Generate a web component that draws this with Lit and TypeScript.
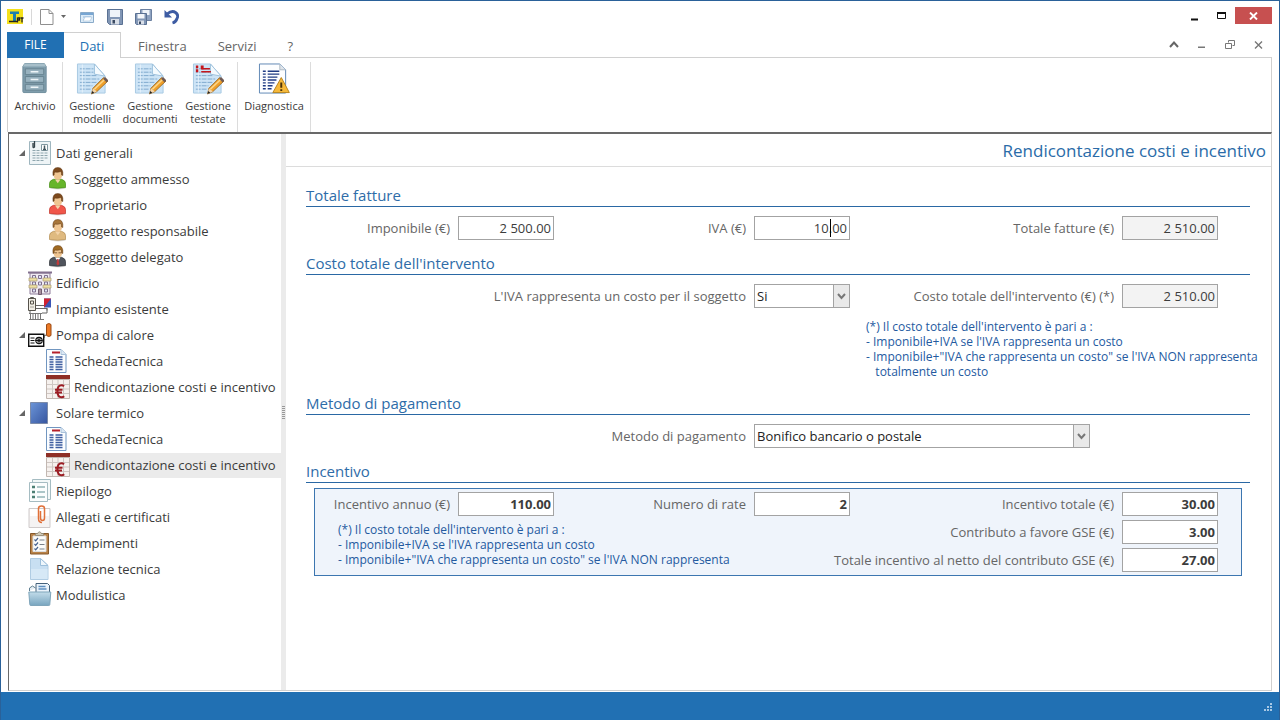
import { LitElement, html, svg, css, nothing } from "lit";
import { customElement } from "lit/decorators.js";
import { classMap } from "lit/directives/class-map.js";

const person = (shirt: string, dark: string, hair: string, suit = false) => svg`<g transform="translate(0 -1)">
  <ellipse cx="12" cy="22" rx="8" ry="1.500" fill="#000" opacity=".12"/>
  <path d="M3.500 21.500v-4q0-3 4-4.200h8q4 1.200 4 4.200v4q-8 1.500-16 0z" fill=${shirt} stroke=${dark} stroke-width=".7"/>
  <path d="M9 13.500l2.800 3.800 2.700-3.800z" fill=${suit ? "#fff" : "#f3d3a8"}/>
  ${suit ? svg`<path d="M11.200 15h1.300l.8 5-1.400 1.500-1.400-1.500z" fill="#c03a3a"/>` : nothing}
  <path d="M7.500 6q0-4 4.300-4t4.400 4v3q-.5 4.500-4.400 4.800-3.800-.3-4.300-4.800z" fill="#efc591"/>
  <path d="M7 9.500Q6 1.500 11.800 1.500T16.800 9.500L15.600 9q.2-2.500-.8-3.500-3 1.300-6 .5-.8 1-.7 3z" fill=${hair} stroke="#5a3413" stroke-width=".5"/>
  ${suit ? svg`<path d="M8.500 8.800h2.600m1.400 0h2.600" stroke="#6b4a2a" stroke-width=".8"/>` : nothing}</g>`;

const sheet = svg`
  <path d="M.5.5h14.500l5 5v18H.5z" fill="#fbfdff" stroke="#7196c0"/>
  <path d="M15 .5v5h5" fill="#dbe8f4" stroke="#a9c1da"/>
  <path d="M6 3.500h8" stroke="#b5202a" stroke-width="2"/>
  <path d="M3.500 8h4M9.500 8h7M3.500 10.500h4M9.500 10.500h7M3.500 13h4M9.500 13h7M3.500 15.500h4M9.500 15.500h7M3.500 18h4M9.500 18h7M3.500 20.500h4M9.500 20.500h7" stroke="#3c5ca0" stroke-width="1.300"/>`;

const euro = svg`
  <path d="M.5 4.500h23v19H.5z" fill="#f6f1ee" stroke="#c2b7b1"/>
  <path d="M1 9.500h22M1 14h22M1 18.500h22M6.500 5v18M12 5v18M17.500 5v18" stroke="#cfc7c3"/>
  <path d="M0 0h24v4H0z" fill="#8e2f26"/>
  <path d="M18 11.200q-1-.9-2.400-.9-4.200 0-4.200 6t4.200 6q1.500 0 2.600-1M9 14.800h7.500M9 17.500h7" fill="none" stroke="#9c1c23" stroke-width="2"/>`;

const glyphs: Record<string, unknown> = {
  general: svg`
    <path d="M1.500.5h21v23h-21z" fill="#eef4f6" stroke="#9fb6bf"/>
    <path d="M6.500 0v6q-1.500 1.500-1.500-.5V2" fill="none" stroke="#34434a" stroke-width="1.300"/>
    <path d="M13.500 3.500h6v6h-6z" fill="#fff" stroke="#7f979f"/>
    <path d="M16.500 4.500v4M15 8.500h3" stroke="#44575f" stroke-width="1.500"/>
    <path d="M4.500 9.500h7M4.500 12h15M4.500 14.500h15M4.500 17h15M4.500 19.500h11" stroke="#8fa6ae" stroke-dasharray="3 1"/>`,
  green: person("#66b52a", "#458c12", "#7d4a1d"),
  red: person("#f0564a", "#c03027", "#7d4a1d"),
  sand: person("#dfba80", "#b38d52", "#a8763a"),
  suit: person("#4f545c", "#2e3238", "#a06a22", true),
  building: svg`
    <path d="M2 2h20v21H2z" fill="#efeaf1" stroke="#8f7e9b"/>
    <path d="M0 1.500h24" stroke="#83718f" stroke-width="2"/>
    <path d="M4.500 4.500h3v3h-3zM10.500 4.500h3v3h-3zM16.500 4.500h3v3h-3zM4.500 11h3v3h-3zM10.500 11h3v3h-3zM16.500 11h3v3h-3zM4.500 18h3v3h-3zM16.500 18h3v3h-3z" fill="#dfe6f5" stroke="#806f8e"/>
    <path d="M1 7h8v3H1zM15 7h8v3h-8zM1 14h8v3H1zM15 14h8v3h-8z" fill="#eee0a3" stroke="#a99b74" stroke-width=".7"/>
    <path d="M10.500 18h3v5.500h-3z" fill="#a7909f" stroke="#705d70"/>`,
  plant: svg`
    <path d="M.5 1.500h7v12h-7z" fill="#f1eee5" stroke="#55524b"/>
    <path d="M2.500 1.500v-1h3v1M2.500 4h3v3h-3zM2.500 10h1m1 0h1" fill="none" stroke="#55524b"/>
    <path d="M8 8.500h9M8 11.500h11v2M2 14v3M19 11v5h-5" fill="none" stroke="#666"/>
    <path d="M16 1.500h7v9h-7z" fill="#3a55b5"/><path d="M16 1.500h7l-7 9z" fill="#cf2233"/>
    <path d="M2.500 16v7M5 16v7M7.500 16v7M10 16v7M12.500 16v7M1 16.500h13M1 22.500h15" stroke="#777"/>`,
  pump: svg`
    <path d="M18.500 1.500q2.500-2 4.500 0v11q-2 2-4.500 0z" fill="#ec7a26" stroke="#9a4a16"/>
    <path d="M18 12l-2 1v2" fill="none" stroke="#555"/>
    <path d="M.7 11.200h15v12h-15z" fill="#fff" stroke="#111" stroke-width="1.400"/>
    <path d="M2.500 15h4M2.500 17.500h4M2.500 20h4" stroke="#111"/>
    <circle cx="11" cy="17.500" r="3.200" fill="#fff" stroke="#111" stroke-width="1.200"/>
    <path d="M11 14v7M7.500 17.500h7M9 15.300l4 4.400M13 15.300l-4 4.400" stroke="#111"/>`,
  solar: svg`
    <defs><linearGradient id="sol" x2="1" y2="1"><stop stop-color="#6c95d8"/><stop offset="1" stop-color="#36559f"/></linearGradient></defs>
    <path d="M2.500 1.500h17v21h-17z" fill="url(#sol)" stroke="#7c8ba8"/>`,
  sheet,
  euro,
  summary: svg`
    <path d="M4.500.5h18v20h-18z" fill="#f3f8f8" stroke="#a5bcc2"/>
    <path d="M1.500 3.500h18v19h-18z" fill="#fbfdfd" stroke="#a5bcc2"/>
    <path d="M4 8h3M4 13h3M4 18h3" stroke="#4d7f74" stroke-width="2.600"/>
    <path d="M9 8h8M9 13h8M9 18h8" stroke="#93b4b7" stroke-width="1.400"/>`,
  clip: svg`
    <path d="M1 3.500h21v19H1z" fill="#f5f3f3" stroke="#cfcaca"/>
    <path d="M2 4h19v7H2z" fill="#fff"/>
    <path d="M12.500 6v7q0 2.500 2 2.500t2-2.500V3.500q0-2.500-3-2.500t-3 2.500v10q0 4 3.500 4" fill="none" stroke="#e0713a" stroke-width="1.500"/>`,
  tasks: svg`
    <path d="M2.500 2.500h18v20.500h-18z" fill="#b98349" stroke="#86592b"/>
    <path d="M5 5h13v15.500H5z" fill="#fcfcfa" stroke="#ddd"/>
    <path d="M7.500 4.500V2.500h2Q11.500-1 13.500 2.500h2v2z" fill="#cfc9b8" stroke="#8e8674" stroke-width=".8"/>
    <path d="M6.500 8.500l1.200 1.300L10 7M6.500 13l1.200 1.300L10 11.500M6.500 17.500l1.200 1.300L10 16" fill="none" stroke="#44618f" stroke-width="1.200"/>
    <path d="M11.500 9h5M11.500 13.500h5M11.500 18h5" stroke="#7a8189" stroke-width="1.200"/>`,
  page: svg`
    <path d="M2.500 1.500h10l7.500 7v14H2.500z" fill="#c8dff2" stroke="#b0cce3"/>
    <path d="M3 12h16.500v10H3z" fill="#d6e8f6"/>
    <path d="M12.500 1.500v7H20z" fill="#eef6fc" stroke="#9dbfdb"/>`,
  folder: svg`
    <path d="M1.500 8V5l3-2 3 2" fill="#e6eef3" stroke="#5f7f92"/>
    <path d="M8 .5h11.500l2 2v7H8z" fill="#eaf3fb" stroke="#45627b"/>
    <path d="M10.500 3.500h7M10.500 6h8" stroke="#5d8fc0" stroke-width="1.300"/>
    <defs><linearGradient id="fol" x2="0" y2="1"><stop stop-color="#c2dcea"/><stop offset="1" stop-color="#78a5bf"/></linearGradient></defs>
    <path d="M.8 9h22l-1 12.500q0 1-1 1h-18q-1 0-1-1z" fill="url(#fol)" stroke="#7fa5ba"/>`,
};

const pencil = svg`
  <path d="M33 18l-11.500 11-5.500 2.500 1.500-6L28.500 14.500z" fill="#f0a02a" stroke="#8d5a17" stroke-width=".8"/>
  <path d="M29.500 16.500L19 26.500" stroke="#fbd588" stroke-width="1.600"/>
  <path d="M31.500 19.500l2-2-3.500-3.500-2 1.800z" fill="#6f5a55"/>
  <path d="M17.500 25.500l4 3.500-5.500 2.500z" fill="#f1d5ac"/>
  <path d="M16 31.500l.8-3 2 1.700z" fill="#222"/>`;

const paper = svg`
  <path d="M1.500.5H19L30 13v17.500H1.500z" fill="#cde4f6" stroke="#a8c9e2"/>
  <path d="M4 5.500h14M4 9h14M4 12.500h17M4 16h20M4 19.500h17M4 23h13M4 26.500h11" stroke="#7fa9cd" stroke-dasharray="5 1"/>
  <path d="M6.500 1v29" stroke="#e6f2fb"/>
  <path d="M19 .5V11l11 2z" fill="#f4fafe" stroke="#9ec1dc"/>`;

const ribbonGlyphs: Record<string, unknown> = {
  archive: svg`
    <path d="M6 0h20l2 3v26q0 1-1 1H5q-1 0-1-1V3z" fill="#7f9dac" stroke="#6d8c9c"/>
    <path d="M6 0h20l2 3H4z" fill="#a7bfca"/>
    <path d="M6.500 5.500h19v6h-19zM6.500 13.500h19v6h-19zM6.500 21.500h19v6h-19z" fill="#98b2bf" stroke="#66828f"/>
    <path d="M12 8.500h8M12 16.500h8M12 24.500h8" stroke="#eef5f8" stroke-width="1.600"/>`,
  models: svg`${paper}${pencil}`,
  heads: svg`${paper}
    <path d="M4 2h2.500v3H4zM4 6h2.500v3H4zM9 2h3v4H9z" fill="#c4161c"/><path d="M9.500 8.500h10M9.500 5.500h9" stroke="#c4161c" stroke-width="1.500"/>${pencil}`,
  diag: svg`
    <path d="M1.500.5h21l6 6v24h-27z" fill="#fdfeff" stroke="#5f87b5"/>
    <path d="M22.500.5v6h6" fill="#e0e5ea" stroke="#adb9c4"/>
    <path d="M5 8h3M5 11h3M5 14h3M5 17h3M5 20h3M5 23h3M5 26h3M10 8h12M10 11h12M10 14h10M10 17h9M10 20h7M10 23h5M10 26h4" stroke="#1f3b84" stroke-width="1.400"/>
    <path d="M24 14.500L32.300 30h-17z" fill="#f6b93a" stroke="#b7831d" stroke-linejoin="round"/>
    <path d="M24 19.500V25M24 26.500v1.800" stroke="#4c3208" stroke-width="2"/>`,
};

interface Node { label: string; icon: string; child?: boolean; open?: boolean; current?: boolean; }

const TREE: Node[] = [
  { label: "Dati generali", icon: "general", open: true },
  { label: "Soggetto ammesso", icon: "green", child: true },
  { label: "Proprietario", icon: "red", child: true },
  { label: "Soggetto responsabile", icon: "sand", child: true },
  { label: "Soggetto delegato", icon: "suit", child: true },
  { label: "Edificio", icon: "building" },
  { label: "Impianto esistente", icon: "plant" },
  { label: "Pompa di calore", icon: "pump", open: true },
  { label: "SchedaTecnica", icon: "sheet", child: true },
  { label: "Rendicontazione costi e incentivo", icon: "euro", child: true },
  { label: "Solare termico", icon: "solar", open: true },
  { label: "SchedaTecnica", icon: "sheet", child: true },
  { label: "Rendicontazione costi e incentivo", icon: "euro", child: true, current: true },
  { label: "Riepilogo", icon: "summary" },
  { label: "Allegati e certificati", icon: "clip" },
  { label: "Adempimenti", icon: "tasks" },
  { label: "Relazione tecnica", icon: "page" },
  { label: "Modulistica", icon: "folder" },
];

const RIBBON = [
  [{ label: ["Archivio"], icon: "archive" }],
  [
    { label: ["Gestione", "modelli"], icon: "models" },
    { label: ["Gestione", "documenti"], icon: "models" },
    { label: ["Gestione", "testate"], icon: "heads" },
  ],
  [{ label: ["Diagnostica"], icon: "diag" }],
];

@customElement("side-tree")
export class SideTree extends LitElement {
  static styles = css`
    :host { display: block; padding: 6px 0; }
    ul { list-style: none; margin: 0; padding: 0; }
    .row { display: flex; align-items: center; height: 26px; padding-left: 7px; }
    .row.child { padding-left: 37px; }
    .toggle { display: flex; width: 12px; height: 12px; padding: 2px; border: 0; background: none; }
    .spacer { width: 12px; }
    .row.child .spacer { width: 0; }
    .icon { flex: none; width: 24px; height: 24px; }
    .link { flex: 1; display: flex; align-items: center; height: 25px; padding-left: 4px; color: #3b3b3b; text-decoration: none; white-space: nowrap; }
    .link.current { background: #ebebeb; }
  `;
  render() {
    return html`<ul>
      ${TREE.map((n) => html`<li class=${classMap({ row: true, child: !!n.child })}>
        ${n.open
          ? html`<button class="toggle" aria-label="Comprimi ${n.label}"><svg width="8" height="8" viewBox="0 0 8 8"><path d="M7 1v6H1z" fill="#666"/></svg></button>`
          : html`<span class="spacer"></span>`}
        <svg class="icon" viewBox="0 0 24 24">${glyphs[n.icon]}</svg>
        <a href="#" class=${classMap({ link: true, current: !!n.current })}>${n.label}</a>
      </li>`)}
    </ul>`;
  }
}

@customElement("cost-form")
export class CostForm extends LitElement {
  static styles = css`
    :host { display: block; min-width: 0; }
    .title { margin: 0; height: 32px; padding-right: 5px; border-bottom: 1px solid #dcdcdc; font-size: 17px; line-height: 34px; font-weight: 400; text-align: right; color: #2a6ba8; }
    .body { padding: 19px 21px 0 20px; }
    .section { margin-bottom: 14px; }
    .heading { margin: 0 0 9px; padding-bottom: 2px; border-bottom: 1px solid #2a68a4; font-size: 15px; line-height: 18px; font-weight: 400; color: #2e6ca8; }
    .grid { display: grid; grid-template-columns: minmax(0, 248fr) minmax(0, 296fr) minmax(0, 368fr); row-gap: 4px; padding-right: 32px; }
    .panel { margin: -4px 8px 0; padding: 3px 23px 3px 0; grid-template-columns: minmax(0, 239fr) minmax(0, 296fr) minmax(0, 368fr); border: 1px solid #3c76b0; background: #eff4fb; }
    .field { display: flex; justify-content: flex-end; align-items: center; gap: 8px; white-space: nowrap; color: #666; }
    .field label { flex: none; }
    .second { grid-column: 2; }
    .third { grid-column: 3; }
    .box { flex: none; box-sizing: border-box; width: 96px; height: 24px; margin: 0; padding: 0 2px; border: 1px solid #a3a3a3; border-radius: 0; background: #fff; color: #3c3c3c; font: inherit; text-align: right; outline: none; }
    .box[readonly] { background: #f3f3f3; }
    .panel .box { background: #fff; font-weight: 700; }
    .edit { position: relative; display: flex; }
    .caret { position: absolute; right: 19px; top: 3px; width: 1px; height: 18px; background: #000; }
    .combo { position: relative; flex: none; display: flex; width: 96px; }
    .combo.long { width: 336px; }
    .combo .box { width: 100%; appearance: none; padding: 0 18px 0 2px; text-align: left; color: #222; }
    .arrow { position: absolute; right: 1px; top: 1px; width: 15px; height: 22px; border-left: 1px solid #a3a3a3; background: #e9e9e9; pointer-events: none; }
    .pay { display: flex; justify-content: flex-end; align-items: center; gap: 8px; padding-right: 160px; color: #666; }
    .note { margin: 0; font-size: 12px; line-height: 15px; color: #245a9f; white-space: pre; }
    .aside { grid-column: 3; padding: 7px 0 1px 16px; }
    .under { grid-column: 1 / 3; grid-row: 2 / 4; padding: 2px 0 0 23px; }
  `;

  private field(id: string, label: string, value: string, cls = "", readonly = false) {
    return html`<div class="field ${cls}"><label for=${id}>${label}</label><input class="box" id=${id} .value=${value} ?readonly=${readonly}></div>`;
  }
  private arrow() {
    return html`<svg class="arrow" viewBox="0 0 15 22"><path d="M4 9l3.500 4L11 9" fill="none" stroke="#777" stroke-width="2"/></svg>`;
  }

  render() {
    return html`
      <h1 class="title">Rendicontazione costi e incentivo</h1>
      <div class="body">
        <section class="section">
          <h2 class="heading">Totale fatture</h2>
          <div class="grid">
            ${this.field("imp", "Imponibile (€)", "2 500.00")}
            <div class="field"><label for="iva">IVA (€)</label><span class="edit"><input class="box" id="iva" .value=${"10.00"}><span class="caret"></span></span></div>
            ${this.field("tot", "Totale fatture (€)", "2 510.00", "", true)}
          </div>
        </section>
        <section class="section">
          <h2 class="heading">Costo totale dell'intervento</h2>
          <div class="grid">
            <div class="field second"><label for="sog">L'IVA rappresenta un costo per il soggetto</label>
              <span class="combo"><select class="box" id="sog"><option>Si</option><option>No</option></select>${this.arrow()}</span></div>
            ${this.field("cti", "Costo totale dell'intervento (€) (*)", "2 510.00", "third", true)}
            <p class="note aside">(*) Il costo totale dell'intervento è pari a :
- Imponibile+IVA se l'IVA rappresenta un costo
- Imponibile+"IVA che rappresenta un costo" se l'IVA NON rappresenta
   totalmente un costo</p>
          </div>
        </section>
        <section class="section">
          <h2 class="heading">Metodo di pagamento</h2>
          <div class="pay"><label for="pay">Metodo di pagamento</label>
            <span class="combo long"><select class="box" id="pay"><option>Bonifico bancario o postale</option></select>${this.arrow()}</span></div>
        </section>
        <section class="section">
          <h2 class="heading">Incentivo</h2>
          <div class="grid panel">
            ${this.field("ann", "Incentivo annuo (€)", "110.00")}
            ${this.field("rate", "Numero di rate", "2")}
            ${this.field("itot", "Incentivo totale (€)", "30.00")}
            ${this.field("gse", "Contributo a favore GSE (€)", "3.00", "third")}
            ${this.field("net", "Totale incentivo al netto del contributo GSE (€)", "27.00", "third")}
            <p class="note under">(*) Il costo totale dell'intervento è pari a :
- Imponibile+IVA se l'IVA rappresenta un costo
- Imponibile+"IVA che rappresenta un costo" se l'IVA NON rappresenta</p>
          </div>
        </section>
      </div>`;
  }
}

@customElement("app-root")
export class AppRoot extends LitElement {
  static styles = css`
    :host { display: flex; flex-direction: column; box-sizing: border-box; min-height: 100vh; border: 1px solid #2a6199; border-bottom: 0; background: #fff; font: 13px/18px "Open Sans", "Noto Sans", sans-serif; color: #444; }
    button { padding: 0; border: 0; background: none; font: inherit; color: inherit; }
    svg { display: block; }
    .bar { display: flex; align-items: center; height: 31px; padding: 0 7px 0 6px; }
    .logo { margin-right: 7px; }
    .rule { width: 1px; height: 16px; margin-right: 8px; background: #d8d8d8; }
    .quick { display: flex; align-items: center; gap: 12px; flex: 1; }
    .new { display: flex; align-items: center; gap: 7px; margin-right: 2px; }
    .win { display: flex; align-self: flex-start; padding-top: 6px; }
    .wbtn { display: grid; place-items: center; width: 27px; height: 17px; }
    .close { width: 37px; background: #c75050; }
    .tabs { display: flex; align-items: stretch; height: 25px; margin: 0 7px 0 6px; border-bottom: 1px solid #d0d0d0; }
    .file { width: 57px; height: 26px; background: #2170b3; color: #fff; font-size: 12px; }
    .tab { box-sizing: border-box; height: 26px; padding: 2px 14px 0 17px; color: #666; }
    .tab.on { width: 57px; padding: 0; border: 1px solid #d0d0d0; border-bottom: 0; border-left: 0; background: #fff; color: #2170b3; }
    .mdi { display: flex; margin-left: auto; }
    .mbtn { display: grid; place-items: center; width: 28px; }
    .ribbon { display: flex; height: 74px; margin: 0 7px 0 6px; border-left: 1px solid #d0d0d0; border-right: 1px solid #d0d0d0; }
    .group { display: flex; border-right: 1px solid #dcdcdc; margin: 4px 0 0; }
    .tool { display: flex; flex-direction: column; align-items: center; width: 58px; font-size: 11px; line-height: 13px; color: #3a3a3a; white-space: nowrap; }
    .group:first-child .tool { width: 54px; }
    .group:last-child .tool { width: 72px; }
    .pic { width: 32px; height: 32px; margin: 1px 0 4px; }
    .work { flex: 1; display: grid; grid-template-columns: 272px 5px minmax(0, 1fr); margin: 0 7px 1px; border: 1px solid #d0d0d0; border-top: 2px solid #696969; border-left-color: #696969; }
    .split { display: grid; place-items: center; background: #ebebeb; }
    .status { display: flex; justify-content: flex-end; align-items: flex-end; height: 28px; padding: 0 6px 0 0; background: #2170b3; }
    .grip { margin-bottom: 8px; }
  `;

  render() {
    return html`
      <header class="bar">
        <svg class="logo" width="17" height="16" viewBox="0 0 17 16"><path d="M0 0h16v15H0z" fill="#f5e11b"/><path d="M3 2.500h9v2.500H9v7H6V5H3z" fill="#1d7fae"/><path d="M2 12.500h9M10.500 8.500v5M10.500 9h2v2h-2M13.500 9h3M15 9v4.500" fill="none" stroke="#222" stroke-width="1.300"/></svg>
        <span class="rule"></span>
        <div class="quick">
          <button class="new" aria-label="Nuovo">
            <svg width="14" height="16" viewBox="0 0 14 16"><path d="M.5.5h8.500l4 4v11H.5z" fill="#fff" stroke="#8f8f8f"/><path d="M9 .5v4h4" fill="none" stroke="#8f8f8f"/></svg>
            <svg width="5" height="3" viewBox="0 0 5 3"><path d="M0 0h5L2.500 3z" fill="#666"/></svg>
          </button>
          <button aria-label="Apri"><svg width="15" height="16" viewBox="0 0 15 16"><path d="M.5 3.500h13v10H.5z" fill="#dcebf7" stroke="#8aabc9"/><path d="M1 5h12" stroke="#78a6d3" stroke-width="2"/><path d="M3 8h8M3 11h5" stroke="#8fb7dc"/><path d="M5 8h7l-2 4H3z" fill="#fff" stroke="#9fbdd8" stroke-width=".6"/></svg></button>
          <button aria-label="Salva"><svg width="16" height="16" viewBox="0 0 16 16"><path d="M.5.5h15v15h-13l-2-2z" fill="#8196b5" stroke="#5a7193"/><path d="M3 1h10v7H3z" fill="#eef3f9"/><path d="M4 10h8v5.500H4z" fill="#d9dfe8"/><path d="M5.500 11H8v3.500H5.500z" fill="#3a4a63"/></svg></button>
          <button aria-label="Salva tutto"><svg width="17" height="16" viewBox="0 0 17 16"><path d="M5.500.5h11v11h-11z" fill="#8ea2c0" stroke="#6b80a0"/><path d="M7.500 1h7v5h-7z" fill="#eef3f9"/><path d="M.5 4.500h11v11h-10l-1-1z" fill="#8196b5" stroke="#5a7193"/><path d="M2.500 5h7v4.500h-7z" fill="#f3f6fa"/><path d="M3 11.500h6v4H3z" fill="#d9dfe8"/><path d="M4 12.500h2V15H4z" fill="#3a4a63"/></svg></button>
          <button aria-label="Annulla"><svg width="15" height="16" viewBox="0 0 15 16"><path d="M3 5Q8 1 11.500 3.500t1.500 6Q12 13 8.500 14" fill="none" stroke="#3d5ca3" stroke-width="2.800"/><path d="M.5 1v7.500H8z" fill="#3d5ca3"/></svg></button>
        </div>
        <div class="win">
          <button class="wbtn" aria-label="Riduci"><svg width="8" height="10"><path d="M0 7.500h7v2H0z" fill="#111"/></svg></button>
          <button class="wbtn" aria-label="Ingrandisci"><svg width="9" height="8"><path d="M.5 1.500h8v5h-8z" fill="none" stroke="#111"/><path d="M0 0h9v2H0z" fill="#111"/></svg></button>
          <button class="wbtn close" aria-label="Chiudi"><svg width="9" height="8"><path d="M1 .5l7 7M8 .5l-7 7" stroke="#fff" stroke-width="1.900"/></svg></button>
        </div>
      </header>
      <nav class="tabs">
        <button class="file">FILE</button>
        <button class="tab on">Dati</button>
        <button class="tab">Finestra</button>
        <button class="tab">Servizi</button>
        <button class="tab">?</button>
        <div class="mdi">
          <button class="mbtn" aria-label="Comprimi barra"><svg width="10" height="7"><path d="M1 6l4-4.500L9 6" fill="none" stroke="#666" stroke-width="2"/></svg></button>
          <button class="mbtn" aria-label="Riduci scheda"><svg width="8" height="8"><path d="M0 5.500h7V7H0z" fill="#777"/></svg></button>
          <button class="mbtn" aria-label="Ripristina scheda"><svg width="10" height="9"><path d="M3.500 2.500v-2h6v5h-2M.5 3.500h6v5h-6z" fill="none" stroke="#777"/></svg></button>
          <button class="mbtn" aria-label="Chiudi scheda"><svg width="9" height="8"><path d="M1 .5l7 7M8 .5l-7 7" stroke="#777" stroke-width="1.400"/></svg></button>
        </div>
      </nav>
      <div class="ribbon">
        ${RIBBON.map((g) => html`<div class="group">${g.map((t) => html`<button class="tool">
          <svg class="pic" viewBox="0 0 33 32">${ribbonGlyphs[t.icon]}</svg>${t.label.map((l) => html`<span>${l}</span>`)}</button>`)}</div>`)}
      </div>
      <main class="work">
        <side-tree></side-tree>
        <div class="split"><svg width="3" height="13"><path d="M0 .5h3M0 2.500h3M0 4.500h3M0 6.500h3M0 8.500h3M0 10.500h3M0 12.500h3" stroke="#999"/></svg></div>
        <cost-form></cost-form>
      </main>
      <footer class="status"><svg class="grip" width="9" height="9"><path d="M6 0h2v2H6zM3 3h2v2H3zM6 3h2v2H6zM0 6h2v2H0zM3 6h2v2H3zM6 6h2v2H6z" fill="#a8c8e4"/></svg></footer>`;
  }
}
